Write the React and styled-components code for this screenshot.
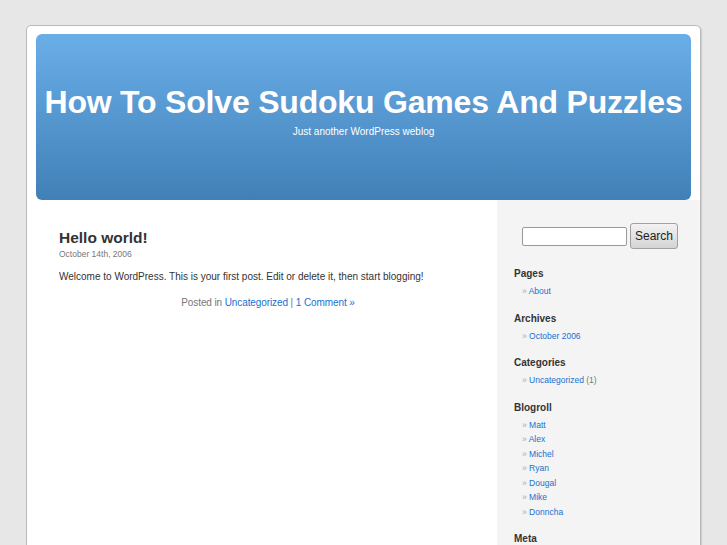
import React from 'react'
import styled, { createGlobalStyle } from 'styled-components'

const GlobalStyle = createGlobalStyle`
  html, body {
    margin: 0;
    padding: 0;
    background: #e7e7e7;
    font-family: 'Liberation Sans', Arial, sans-serif;
    color: #333;
    overflow: hidden;
  }
  a {
    color: #2070cf;
    text-decoration: none;
  }
`

const Page = styled.div`
  margin: 25px 0 0 26px;
  width: 673px;
  height: 530px;
  background: #fff;
  border: 1px solid #b9b9b9;
  border-radius: 5px;
  box-shadow: 1px 1px 1px rgba(0, 0, 0, 0.12);
  padding-top: 8px;
  display: flex;
  flex-direction: column;
`

const Header = styled.div`
  margin: 0 9px;
  height: 166px;
  flex-shrink: 0;
  border-radius: 6px;
  background: linear-gradient(#6aaee8, #4180b7);
  color: #fff;
  text-align: center;
  padding-top: 50px;
  box-sizing: border-box;
`

const Title = styled.h1`
  margin: 0;
  font-size: 32px;
  line-height: 36px;
  font-weight: bold;
  letter-spacing: -0.2px;
`

const Tagline = styled.div`
  margin-top: 6px;
  font-size: 10px;
`

const Main = styled.div`
  display: flex;
  flex: 1;
`

const Content = styled.div`
  flex: 1;
  padding: 29px 20px 0 32px;
`

const PostTitle = styled.h2`
  margin: 0;
  font-size: 15.5px;
  line-height: 18px;
  font-weight: bold;
  color: #333;
`

const PostDate = styled.div`
  margin-top: 2px;
  font-size: 8.5px;
  color: #777;
`

const PostBody = styled.p`
  margin: 11px 0 0;
  font-size: 10px;
  line-height: 14px;
`

const PostMeta = styled.p`
  margin: 13px 0 0;
  font-size: 10px;
  color: #777;
  text-align: center;
  letter-spacing: -0.1px;
`

const Sidebar = styled.div`
  width: 203px;
  background: #f4f4f4;
  padding: 23px 0 0 17px;
  box-sizing: border-box;
  border-radius: 0 0 5px 0;
`

const SearchForm = styled.form`
  display: flex;
  align-items: center;
  gap: 3px;
  margin: 0 0 18px 8px;
`

const SearchInput = styled.input`
  width: 105px;
  height: 19px;
  box-sizing: border-box;
  border: 1px solid #999;
  border-radius: 2px;
  background: #fff;
  padding: 0 2px;
`

const SearchButton = styled.button`
  width: 48px;
  height: 26px;
  box-sizing: border-box;
  border: 1px solid #a0a0a0;
  border-radius: 3px;
  background: linear-gradient(#f2f2f2, #d4d4d4);
  font-family: 'Liberation Sans', Arial, sans-serif;
  font-size: 12px;
  color: #222;
  padding: 0;
`

const Section = styled.div`
  margin-bottom: 13px;
`

const SectionTitle = styled.h2`
  margin: 0;
  font-size: 10px;
  line-height: 13px;
  font-weight: bold;
  color: #333;
`

const List = styled.ul`
  list-style: none;
  margin: 4px 0 0;
  padding: 0 0 0 8px;
`

const Item = styled.li`
  font-size: 8.5px;
  line-height: 14.5px;
  &::before {
    content: '» ';
    color: #aaa;
  }
`

const Count = styled.span`
  color: #777;
`

const sections = [
  { title: 'Pages', items: ['About'] },
  { title: 'Archives', items: ['October 2006'] },
  { title: 'Categories', items: ['Uncategorized'], count: true },
  { title: 'Blogroll', items: ['Matt', 'Alex', 'Michel', 'Ryan', 'Dougal', 'Mike', 'Donncha'] },
  { title: 'Meta', items: [] },
]

const App = () => {
  return (
    <>
      <GlobalStyle />
      <Page>
        <Header>
          <Title>How To Solve Sudoku Games And Puzzles</Title>
          <Tagline>Just another WordPress weblog</Tagline>
        </Header>

        <Main>
          <Content>
            <PostTitle>Hello world!</PostTitle>
            <PostDate>October 14th, 2006</PostDate>
            <PostBody>
              Welcome to WordPress. This is your first post. Edit or delete it, then start blogging!
            </PostBody>
            <PostMeta>
              Posted in <a href="#">Uncategorized</a> | <a href="#">1 Comment »</a>
            </PostMeta>
          </Content>

          <Sidebar>
            <SearchForm onSubmit={e => e.preventDefault()}>
              <SearchInput type="text" />
              <SearchButton type="submit">Search</SearchButton>
            </SearchForm>

            {sections.map(s => (
              <Section key={s.title}>
                <SectionTitle>{s.title}</SectionTitle>
                {s.items.length > 0 && (
                  <List>
                    {s.items.map(i => (
                      <Item key={i}>
                        <a href="#">{i}</a>
                        {s.count && <Count> (1)</Count>}
                      </Item>
                    ))}
                  </List>
                )}
              </Section>
            ))}
          </Sidebar>
        </Main>
      </Page>
    </>
  )
}

export default App
